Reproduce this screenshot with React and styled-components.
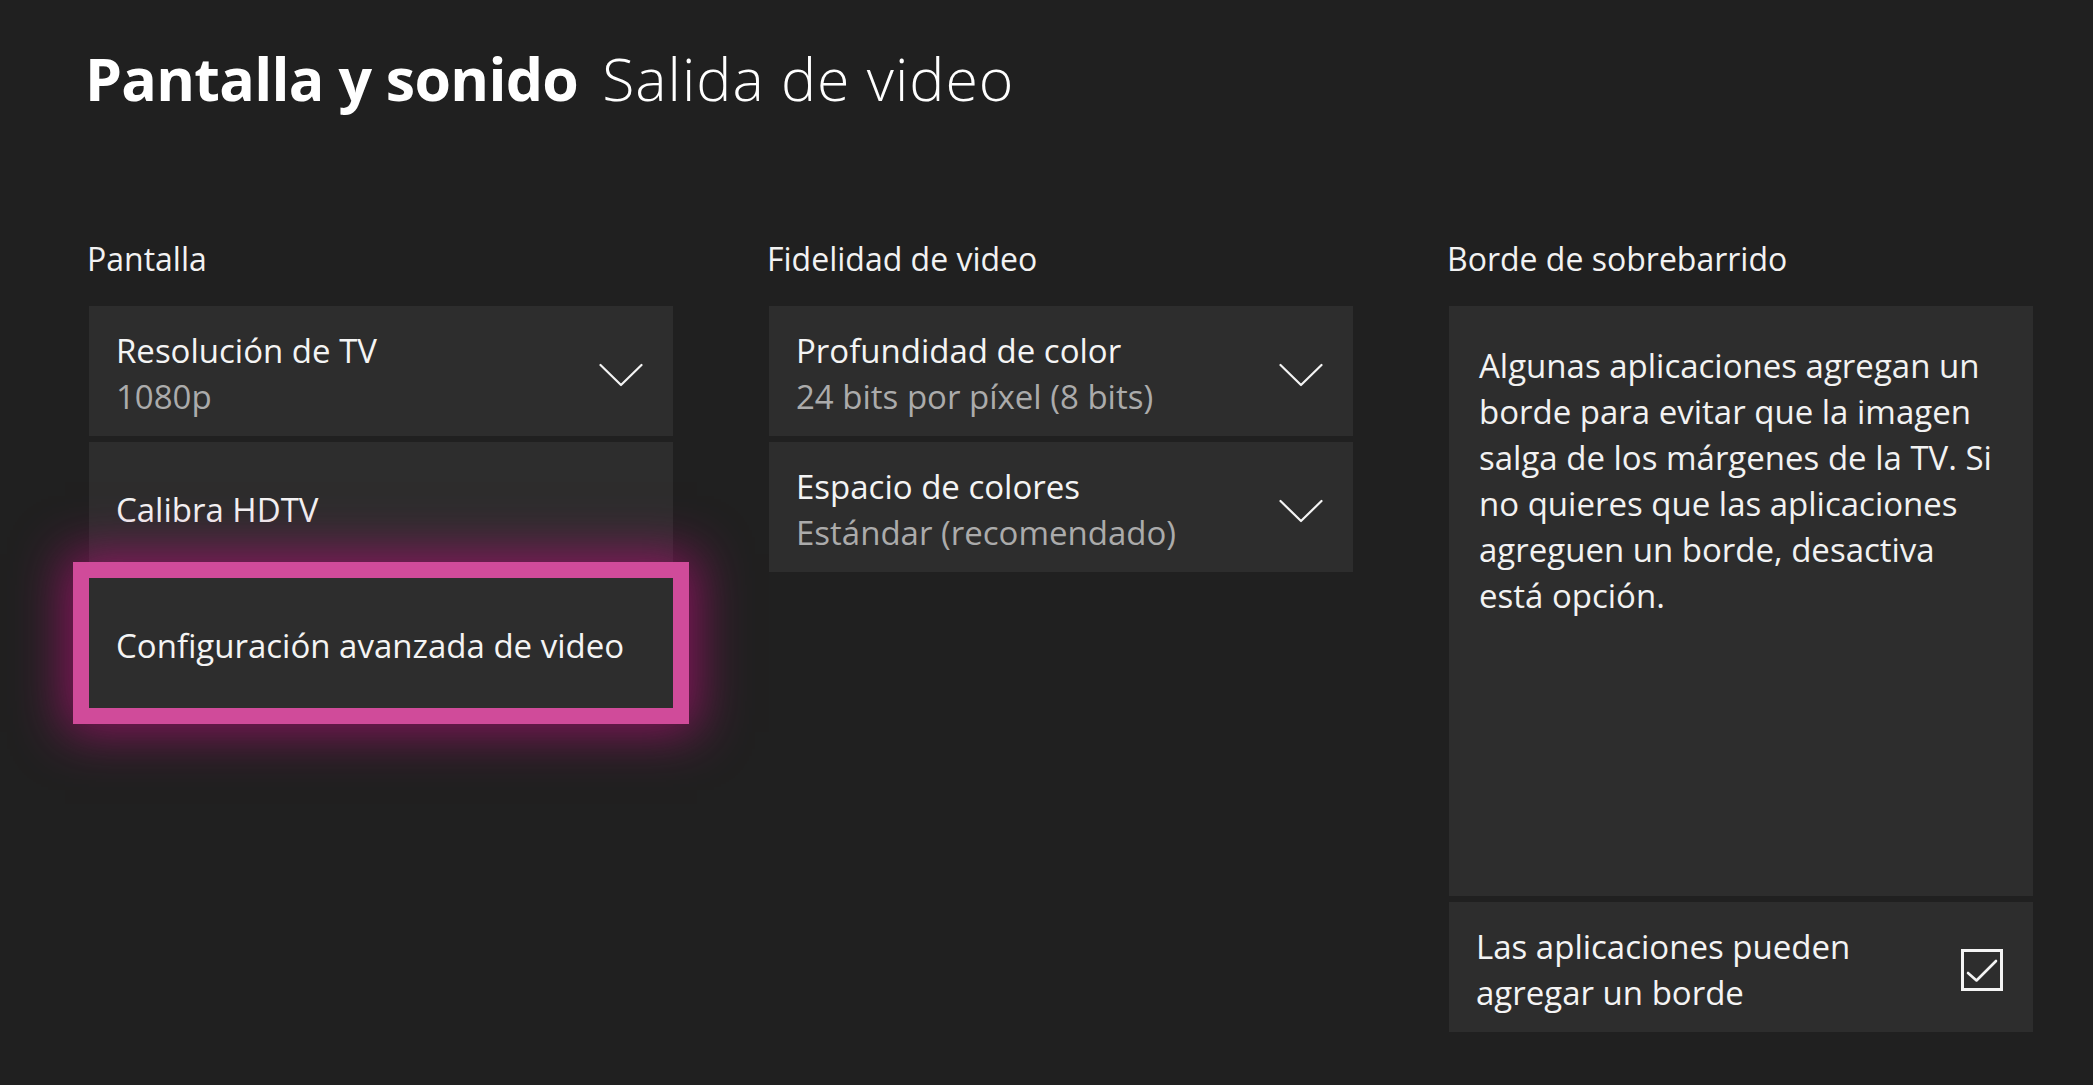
import styled, { createGlobalStyle } from "styled-components";

const GlobalStyle = createGlobalStyle`
  html, body {
    margin: 0;
    padding: 0;
    background: #202020;
  }
  body {
    font-family: "Open Sans", "Noto Sans", sans-serif;
    color: #f2f2f2;
  }
`;

const Page = styled.div`
  width: 2093px;
  height: 1085px;
  box-sizing: border-box;
  padding: 42px 0 0 89px;
  background: #202020;
  overflow: hidden;
`;

const Header = styled.h1`
  margin: 0 0 0 -4px;
  display: flex;
  align-items: baseline;
  gap: 24px;
  font-size: 59px;
  line-height: 72px;
  color: #ffffff;
`;

const Strong = styled.span`
  font-weight: 700;
  letter-spacing: -0.7px;
`;

const Light = styled.span`
  font-weight: 300;
  letter-spacing: 1px;
`;

const Columns = styled.div`
  display: grid;
  grid-template-columns: repeat(3, 584px);
  column-gap: 96px;
  margin-top: 125px;
  align-items: start;
`;

const Column = styled.section`
  display: flex;
  flex-direction: column;
  gap: 6px;
`;

const Label = styled.h2`
  margin: 0 0 21px -2px;
  font-size: 32px;
  font-weight: 400;
  line-height: 40px;
  color: #f2f2f2;
`;

const Card = styled.div`
  box-sizing: border-box;
  height: 130px;
  background: #2d2d2d;
  display: flex;
  align-items: center;
  justify-content: space-between;
  padding: 6px 30px 0 27px;
  font-size: 33px;
  line-height: 46px;
  ${(p) =>
    p.focused &&
    `
    box-shadow: 0 0 0 16px #d04b9a, 0 0 48px 24px rgba(165, 18, 110, 0.8);
  `}
`;

const TextBlock = styled.div`
  display: flex;
  flex-direction: column;
`;

const Primary = styled.span`
  color: #f4f4f4;
`;

const Secondary = styled.span`
  color: #ababab;
`;

const Description = styled.p`
  box-sizing: border-box;
  height: 590px;
  margin: 0;
  background: #2d2d2d;
  padding: 37px 28px 0 30px;
  font-size: 33px;
  line-height: 46px;
  color: #f2f2f2;
`;

const CheckBox = styled.div`
  width: 42px;
  height: 42px;
  box-sizing: border-box;
  border: 3px solid #f4f4f4;
  display: flex;
  align-items: center;
  justify-content: center;
  flex-shrink: 0;
`;

const Chevron = () => (
  <svg width="44" height="26" viewBox="0 0 44 26" fill="none">
    <polyline
      points="1.5,4 22,24 42.5,4"
      stroke="#f4f4f4"
      strokeWidth="2.2"
      strokeLinecap="round"
      strokeLinejoin="round"
    />
  </svg>
);

const Check = () => (
  <svg width="36" height="36" viewBox="0 0 36 36" fill="none">
    <polyline
      points="4,21 12.5,28.5 32,9"
      stroke="#f4f4f4"
      strokeWidth="2.6"
      strokeLinecap="round"
      strokeLinejoin="round"
    />
  </svg>
);

const Dropdown = ({ title, value }) => (
  <Card>
    <TextBlock>
      <Primary>{title}</Primary>
      <Secondary>{value}</Secondary>
    </TextBlock>
    <Chevron />
  </Card>
);

export default function App() {
  return (
    <Page>
      <GlobalStyle />
      <Header>
        <Strong>Pantalla y sonido</Strong>
        <Light>Salida de video</Light>
      </Header>
      <Columns>
        <Column>
          <Label>Pantalla</Label>
          <Dropdown title="Resolución de TV" value="1080p" />
          <Card>
            <Primary>Calibra HDTV</Primary>
          </Card>
          <Card focused>
            <Primary>Configuración avanzada de video</Primary>
          </Card>
        </Column>
        <Column>
          <Label>Fidelidad de video</Label>
          <Dropdown title="Profundidad de color" value="24 bits por píxel (8 bits)" />
          <Dropdown title="Espacio de colores" value="Estándar (recomendado)" />
        </Column>
        <Column>
          <Label>Borde de sobrebarrido</Label>
          <Description>
            Algunas aplicaciones agregan un
            <br />
            borde para evitar que la imagen
            <br />
            salga de los márgenes de la TV. Si
            <br />
            no quieres que las aplicaciones
            <br />
            agreguen un borde, desactiva
            <br />
            está opción.
          </Description>
          <Card>
            <Primary>
              Las aplicaciones pueden
              <br />
              agregar un borde
            </Primary>
            <CheckBox>
              <Check />
            </CheckBox>
          </Card>
        </Column>
      </Columns>
    </Page>
  );
}
